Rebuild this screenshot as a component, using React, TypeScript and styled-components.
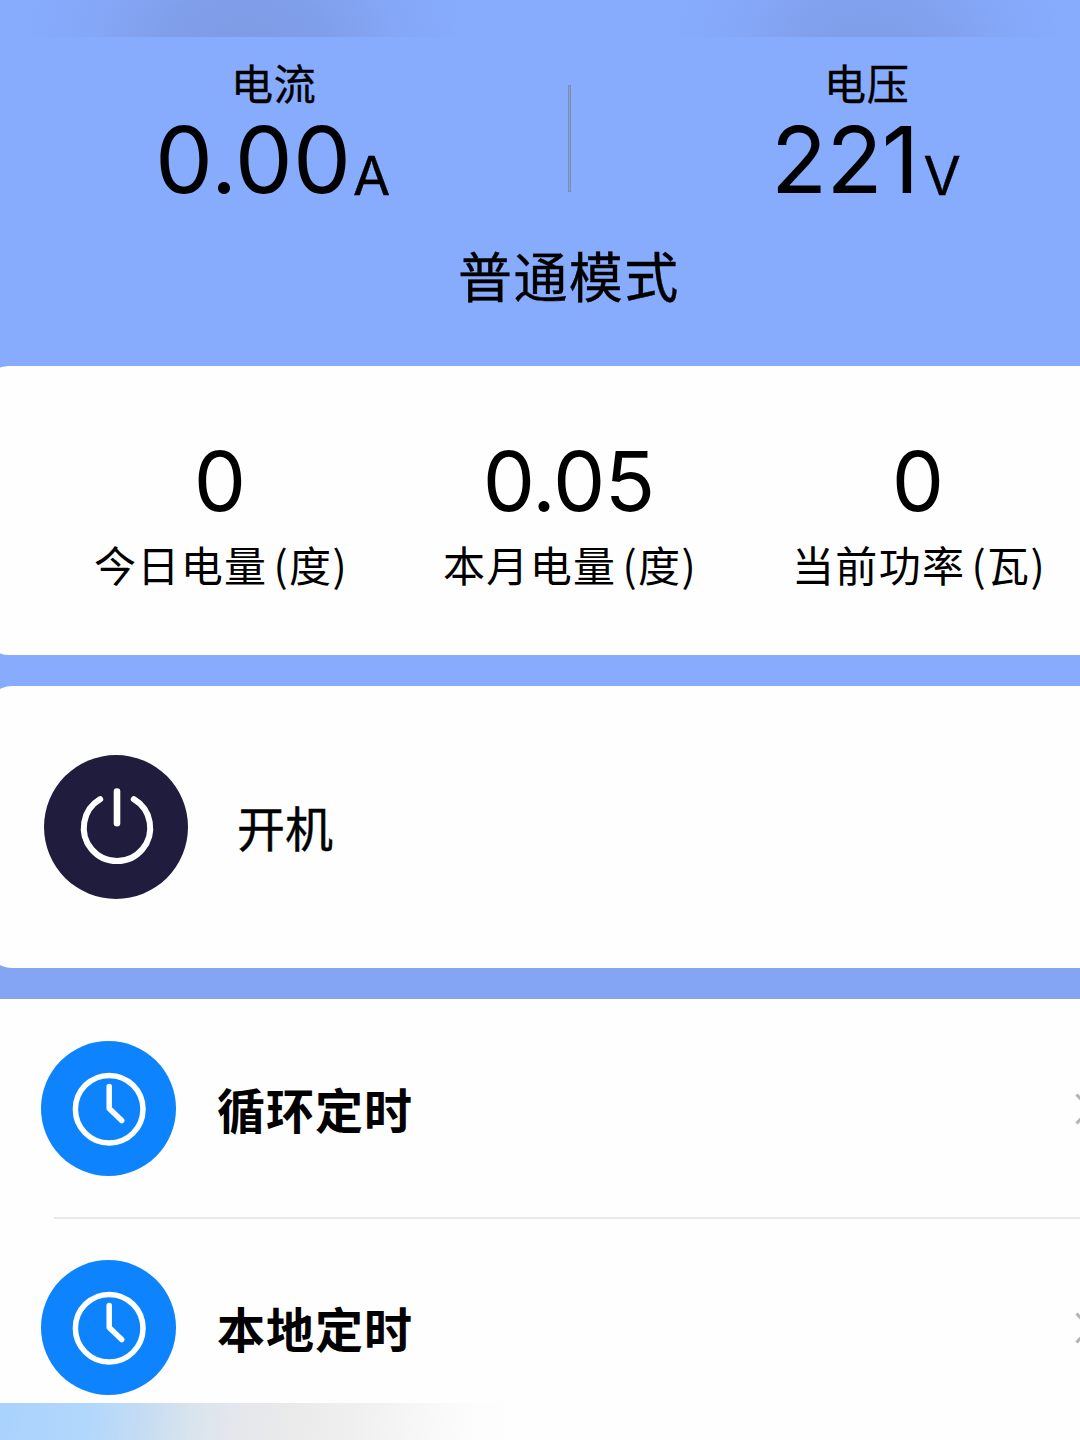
import React from "react";
import styled, { createGlobalStyle } from "styled-components";

const latin = `Inter, "Noto Sans CJK SC", sans-serif`;
const cjk = `"Noto Sans CJK SC", sans-serif`;

const GlobalStyle = createGlobalStyle`
  * { box-sizing: border-box; }
  body { margin: 0; background: #fff; overflow: hidden; }
`;

const Screen = styled.main`
  width: 1080px;
  height: 1440px;
  overflow: hidden;
  display: flex;
  flex-direction: column;
  background: #fefefe;
  color: #000;
`;

const Summary = styled.section`
  height: 999px;
  flex: none;
  display: flex;
  flex-direction: column;
  background: linear-gradient(#87abfd 0 960px, #83a5f3 968px);
`;

const TopHaze = styled.div`
  height: 37px;
  flex: none;
  background:
    radial-gradient(ellipse 220px 150px at 245px 45px, rgba(122, 148, 218, 0.7) 0%, rgba(122, 148, 218, 0.55) 35%, rgba(122, 148, 218, 0.18) 70%, rgba(122, 148, 218, 0) 100%),
    radial-gradient(ellipse 195px 130px at 870px 45px, rgba(122, 148, 218, 0.58) 0%, rgba(122, 148, 218, 0.45) 35%, rgba(122, 148, 218, 0.15) 70%, rgba(122, 148, 218, 0) 100%);
`;

const Readings = styled.div`
  height: 329px;
  flex: none;
  display: flex;
  flex-direction: column;
`;

const MeterRow = styled.div`
  height: 190px;
  display: grid;
  grid-template-columns: 568px 3px 509px;
`;

const Meter = styled.div<{ $shift: number }>`
  display: flex;
  flex-direction: column;
  padding-left: ${(p) => p.$shift}px;
`;

const MeterLabel = styled.div<{ $indent: number }>`
  padding-left: ${(p) => p.$indent}px;
  margin-top: 17px;
  height: 60px;
  font: 400 42px/56px ${cjk};
  letter-spacing: 0.8px;
  white-space: nowrap;
  -webkit-text-stroke: 0.4px #000;
`;

const MeterValue = styled.div<{ $spacing: number }>`
  font: 400 92px/92px ${latin};
  letter-spacing: ${(p) => p.$spacing}px;
  white-space: nowrap;
`;

const Unit = styled.span<{ $gap: number }>`
  margin-left: ${(p) => p.$gap}px;
  font-size: 54px;
  line-height: 1;
  letter-spacing: 0;
  vertical-align: -2px;
  -webkit-text-stroke: 0.4px #000;
`;

const Divider = styled.div`
  width: 3px;
  height: 107px;
  margin-top: 48px;
  background: #8c9fce;
  border: 1px solid #7d8caf;
`;

const Mode = styled.div`
  padding-left: 458px;
  margin-top: 8px;
  font: 400 54px/80px ${cjk};
  letter-spacing: 1.4px;
  -webkit-text-stroke: 0.4px #000;
`;

const Card = styled.section<{ $height: number; $bleed: number }>`
  height: ${(p) => p.$height}px;
  flex: none;
  margin-left: -${(p) => p.$bleed}px;
  padding-left: ${(p) => p.$bleed}px;
  border-radius: 26px 0 0 26px;
  background: #fefefe;
`;

const StatsCard = styled(Card)`
  display: grid;
  grid-template-columns: 349px 349px 349px;
  padding-top: 73px;
  margin-bottom: 31px;
`;

const Stat = styled.div`
  padding-left: 92px;
  display: flex;
  flex-direction: column;
  align-items: center;
`;

const StatValue = styled.div`
  height: 86px;
  margin-right: 2px;
  font: 400 83px/85px ${latin};
  letter-spacing: -0.8px;
`;

const StatLabel = styled.div`
  margin: 9px 0 0 1px;
  font: 400 42px/60px ${cjk};
  letter-spacing: 1.4px;
  white-space: nowrap;
`;

const StatUnit = styled.span`
  margin-left: 6px;
`;

const PowerCard = styled(Card)`
  display: flex;
  align-items: center;
  gap: 49px;
`;

const PowerBadge = styled.div`
  width: 144px;
  height: 144px;
  margin-left: 44px;
  border-radius: 50%;
  background: #201c3d;
`;

const PowerText = styled.div`
  margin-bottom: 3px;
  font: 400 48px/70px ${cjk};
  -webkit-text-stroke: 0.4px #000;
`;

const TimerList = styled.section`
  height: 404px;
  flex: none;
`;

const TimerRow = styled.div`
  height: 219px;
  display: flex;
  align-items: center;
  padding-left: 41px;
`;

const ClockBadge = styled.div`
  width: 135px;
  height: 135px;
  flex: none;
  border-radius: 50%;
  background: #0d83fe;
`;

const TimerText = styled.div`
  width: 857px;
  flex: none;
  margin: 0 0 2px 41px;
  font: 700 48px/70px ${cjk};
  letter-spacing: 1px;
`;

const Rule = styled.div`
  height: 2px;
  margin: -1px 0 -1px 54px;
  background: #e9e9e9;
`;

const ChevronIcon = styled.svg`
  flex: none;
`;

const BottomHaze = styled.div`
  height: 37px;
  flex: none;
  background: linear-gradient(94deg, #a9d2fc 0, #b2d7fc 90px, #c5dcf3 145px, #d8e4ee 190px, #e3e6ec 230px, #eaeaea 290px, #efefef 350px, #f6f6f6 410px, #fcfcfc 470px, #fefefe 515px);
`;

const PowerIcon = () => (
  <svg width="144" height="144" viewBox="0 0 144 144" fill="none" stroke="#fff" strokeLinecap="round">
    <path d="M56.2 44.2A33.2 33.2 0 1 0 89.8 44.2" strokeWidth="6" />
    <path d="M73 36.5V68.2" strokeWidth="6.6" />
  </svg>
);

const ClockIcon = () => (
  <svg width="135" height="135" viewBox="0 0 135 135" fill="none" stroke="#fff" strokeWidth="5.5" strokeLinecap="round" strokeLinejoin="round">
    <circle cx="68.2" cy="68.2" r="33.8" />
    <path d="M68.2 45.5V67.5L80.7 79.5" />
  </svg>
);

const Chevron = () => (
  <ChevronIcon width="20" height="34" viewBox="0 0 20 34" fill="none" stroke="#b4b4b4" strokeWidth="3">
    <path d="M2.5 2.5L16 17L2.5 31.5" />
  </ChevronIcon>
);

const meters = [
  { label: "电流", value: "0.00", unit: "A", shift: 155, indent: 76, gap: 2, spacing: 0 },
  { label: "电压", value: "221", unit: "V", shift: 200, indent: 53, gap: 5, spacing: -0.7 },
];

const stats = [
  { value: "0", label: "今日电量", unit: "(度)" },
  { value: "0.05", label: "本月电量", unit: "(度)" },
  { value: "0", label: "当前功率", unit: "(瓦)" },
];

const MeterBlock = ({ m }: { m: (typeof meters)[number] }) => (
  <Meter $shift={m.shift}>
    <MeterLabel $indent={m.indent}>{m.label}</MeterLabel>
    <MeterValue $spacing={m.spacing}>
      {m.value}
      <Unit $gap={m.gap}>{m.unit}</Unit>
    </MeterValue>
  </Meter>
);

const Timer = ({ text }: { text: string }) => (
  <TimerRow>
    <ClockBadge><ClockIcon /></ClockBadge>
    <TimerText>{text}</TimerText>
    <Chevron />
  </TimerRow>
);

export default function App() {
  return (
    <Screen>
      <GlobalStyle />
      <Summary>
        <TopHaze />
        <Readings>
          <MeterRow>
            <MeterBlock m={meters[0]} />
            <Divider />
            <MeterBlock m={meters[1]} />
          </MeterRow>
          <Mode>普通模式</Mode>
        </Readings>
        <StatsCard $height={289} $bleed={17}>
          {stats.map((s) => (
            <Stat key={s.label}>
              <StatValue>{s.value}</StatValue>
              <StatLabel>
                {s.label}
                <StatUnit>{s.unit}</StatUnit>
              </StatLabel>
            </Stat>
          ))}
        </StatsCard>
        <PowerCard $height={282} $bleed={14}>
          <PowerBadge><PowerIcon /></PowerBadge>
          <PowerText>开机</PowerText>
        </PowerCard>
      </Summary>
      <TimerList>
        <Timer text="循环定时" />
        <Rule />
        <Timer text="本地定时" />
      </TimerList>
      <BottomHaze />
    </Screen>
  );
}
